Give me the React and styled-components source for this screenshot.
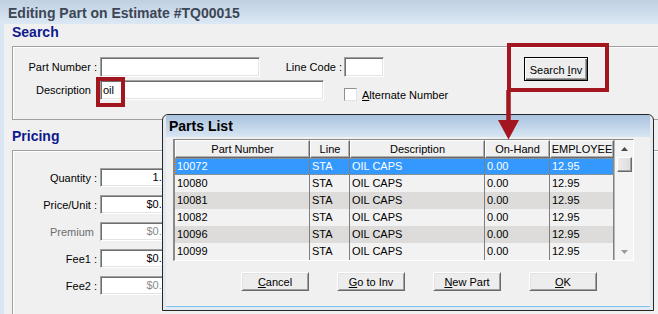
import React from "react";
import styled, { createGlobalStyle } from "styled-components";

const GlobalStyle = createGlobalStyle`
  html, body {
    margin: 0;
    padding: 0;
  }
  body {
    width: 658px;
    height: 314px;
    overflow: hidden;
    background: #f0f0f0;
    font-family: "Liberation Sans", Arial, sans-serif;
    font-size: 11px;
    color: #000;
  }
`;

const Screen = styled.div`
  position: relative;
  width: 658px;
  height: 314px;
  overflow: hidden;
  background: #f0f0f0;
`;

const TitleBar = styled.div`
  height: 24px;
  box-sizing: border-box;
  padding: 3px 0 0 8px;
  line-height: 20px;
  background: linear-gradient(to bottom, #bfd0e2, #dce8f4);
  color: #3c4654;
  font-size: 14px;
  font-weight: bold;
  white-space: nowrap;
`;

const Body = styled.div`
  display: flex;
  flex-direction: column;
  height: 290px;
  box-sizing: border-box;
  border-left: 4px solid #d9e5f2;
  padding-left: 8px;
`;

const SectionTitle = styled.div`
  height: 22px;
  margin-top: ${p => p.$top || 0}px;
  line-height: 16px;
  color: #0f1a8c;
  font-size: 14px;
  font-weight: bold;
`;

const GroupBox = styled.div`
  box-sizing: border-box;
  display: flex;
  flex-direction: column;
  gap: ${p => p.$gap}px;
  height: ${p => (p.$h ? `${p.$h}px` : "auto")};
  flex: ${p => (p.$h ? "none" : "1")};
  margin-right: -20px;
  padding-top: ${p => p.$pt}px;
  border: 1px solid #a0a0a0;
  border-bottom: ${p => (p.$open ? "none" : "1px solid #a0a0a0")};
  box-shadow: inset 1px 1px 0 #fff;
`;

const Row = styled.div`
  display: flex;
  align-items: ${p => p.$align || "center"};
  height: ${p => p.$h}px;
`;

const Label = styled.div`
  box-sizing: border-box;
  width: ${p => p.$w || 84}px;
  padding-right: ${p => p.$pr || 0}px;
  margin-right: ${p => p.$mr ?? 3}px;
  text-align: right;
  white-space: nowrap;
  color: ${p => (p.$dim ? "#6d6d6d" : "#000")};
`;

const Field = styled.div`
  box-sizing: border-box;
  width: ${p => p.$w}px;
  height: ${p => p.$h}px;
  padding: 0 ${p => (p.$right ? 3 : 2)}px;
  line-height: ${p => p.$h - 2}px;
  text-align: ${p => (p.$right ? "right" : "left")};
  color: ${p => (p.$dim ? "#8a8a8a" : "#000")};
  background: #fff;
  border: 1px solid;
  border-color: #a0a0a0 #fff #fff #a0a0a0;
  box-shadow: inset 1px 1px 0 #6e6e6e, inset -1px -1px 0 #e3e3e3;
  white-space: nowrap;
  overflow: hidden;
`;

const CheckGroup = styled.div`
  display: flex;
  align-items: center;
  align-self: flex-start;
  margin: 8px 0 0 20px;
  gap: 5px;
  height: 13px;
`;

const CheckBox = styled.div`
  box-sizing: border-box;
  width: 13px;
  height: 13px;
  background: #fff;
  border: 1px solid;
  border-color: #8e8f8f #e3e3e3 #e3e3e3 #8e8f8f;
`;

const U = styled.span`
  text-decoration: underline;
`;

const Button = styled.div`
  box-sizing: border-box;
  display: flex;
  align-items: center;
  justify-content: center;
  flex: none;
  align-self: flex-start;
  width: ${p => p.$w}px;
  height: ${p => p.$h}px;
  margin-left: ${p => p.$ml || 0}px;
  padding-top: 1px;
  background: #ededed;
  border: 1px solid;
  border-color: ${p => (p.$default ? "#000" : "#fff #696969 #696969 #fff")};
  box-shadow: ${p =>
    p.$default
      ? "inset 1px 1px 0 #fff, inset -1px -1px 0 #696969, inset -2px -2px 0 #a0a0a0"
      : "inset 1px 1px 0 #e3e3e3, inset -1px -1px 0 #a0a0a0"};
  white-space: nowrap;
`;

/* ---------- Parts List dialog ---------- */

const Dialog = styled.div`
  position: absolute;
  left: 162px;
  top: 114px;
  width: 492px;
  height: 197px;
  box-sizing: border-box;
  display: flex;
  flex-direction: column;
  padding: 0 3px 3px;
  background: #e2e9f0;
  border: 1px solid #262626;
  border-radius: 6px 6px 0 0;
`;

const DialogTitle = styled.div`
  height: 22px;
  line-height: 22px;
  padding-left: 3px;
  font-size: 14px;
  font-weight: bold;
  background: linear-gradient(to bottom, #a9c2de, #d8e6f3);
`;

const DialogBody = styled.div`
  flex: 1;
  display: flex;
  flex-direction: column;
  padding: 2px 0 0 7px;
  background: #f0f0f0;
  border-bottom: 1px solid #7cc4ea;
`;

const Grid = styled.div`
  box-sizing: border-box;
  display: flex;
  width: 461px;
  height: 122px;
  border-style: solid;
  border-width: 1px 1px 1px 2px;
  border-color: #8a8a8a #fff #fff #8a8a8a;
  background: #f0f0f0;
`;

const Table = styled.div`
  display: flex;
  flex-direction: column;
  width: 439px;
`;

const cols = "135px 40px 135px 65px 64px";

const HeadRow = styled.div`
  display: grid;
  grid-template-columns: ${cols};
  height: 18px;
`;

const HeadCell = styled.div`
  box-sizing: border-box;
  text-align: center;
  line-height: 16px;
  background: #f0f0f0;
  border: 1px solid;
  border-color: #fff #696969 #696969 #fff;
  box-shadow: inset -1px -1px 0 #b0b0b0;
  white-space: nowrap;
  overflow: hidden;
`;

const DataRow = styled.div`
  display: grid;
  grid-template-columns: ${cols};
  height: 17px;
  background: ${p => (p.$sel ? "#3399ff" : p.$alt ? "#dddcda" : "#f2f2f2")};
  color: ${p => (p.$sel ? "#fff" : "#000")};
  outline: ${p => (p.$sel ? "1px dotted #d08a3a" : "none")};
  outline-offset: -1px;
`;

const Cell = styled.div`
  box-sizing: border-box;
  padding-left: 2px;
  line-height: 17px;
  border-right: 1px solid #7f7f7f;
  white-space: nowrap;
  overflow: hidden;
`;

const ScrollBar = styled.div`
  box-sizing: border-box;
  display: flex;
  flex-direction: column;
  width: 19px;
  border-left: 1px solid #b8b8b8;
  background: #f4f4f4;
`;

const ScrollArrow = styled.div`
  display: flex;
  align-items: center;
  justify-content: center;
  height: 17px;
`;

const Thumb = styled.div`
  box-sizing: border-box;
  width: 15px;
  height: 15px;
  margin-left: 2px;
  background: linear-gradient(to right, #ececec, #dcdcdc);
  border: 1px solid;
  border-color: #fff #696969 #696969 #fff;
  box-shadow: inset -1px -1px 0 #a0a0a0;
`;

const Spacer = styled.div`
  flex: 1;
`;

const ButtonRow = styled.div`
  display: flex;
  gap: 28px;
  margin-top: 11px;
  padding-left: 68px;
`;

/* ---------- annotations ---------- */

const Callout = styled.div`
  position: absolute;
  left: ${p => p.$x}px;
  top: ${p => p.$y}px;
  width: ${p => p.$w}px;
  height: ${p => p.$h}px;
  box-sizing: border-box;
  border: 4px solid #a3161f;
  pointer-events: none;
`;

const Overlay = styled.svg`
  position: absolute;
  left: 0;
  top: 0;
  pointer-events: none;
`;

const parts = [
  ["10072", "STA", "OIL CAPS", "0.00", "12.95"],
  ["10080", "STA", "OIL CAPS", "0.00", "12.95"],
  ["10081", "STA", "OIL CAPS", "0.00", "12.95"],
  ["10082", "STA", "OIL CAPS", "0.00", "12.95"],
  ["10096", "STA", "OIL CAPS", "0.00", "12.95"],
  ["10099", "STA", "OIL CAPS", "0.00", "12.95"],
];

const pricing = [
  { label: "Quantity :", value: "1.00" },
  { label: "Price/Unit :", value: "$0.00" },
  { label: "Premium", value: "$0.00", dimLabel: true, dim: true, pr: 3 },
  { label: "Fee1 :", value: "$0.00" },
  { label: "Fee2 :", value: "$0.00", dim: true },
];

function App() {
  return (
    <Screen>
      <GlobalStyle />
      <TitleBar>Editing Part on Estimate #TQ00015</TitleBar>
      <Body>
        <SectionTitle>Search</SectionTitle>
        <GroupBox $h={74} $pt={10} $gap={3}>
          <Row $h={20} $align="flex-start">
            <Label style={{ lineHeight: "20px" }}>Part Number :</Label>
            <Field $w={160} $h={20} />
            <Label $w={82} $mr={2} style={{ lineHeight: "20px" }}>Line Code :</Label>
            <Field $w={40} $h={20} />
            <Button $w={64} $h={24} $ml={140} $default>
              Search&nbsp;<U>I</U>nv
            </Button>
          </Row>
          <Row $h={20} $align="flex-start">
            <Label $pr={6} style={{ lineHeight: "20px" }}>Description</Label>
            <Field $w={224} $h={20}>oil</Field>
            <CheckGroup>
              <CheckBox />
              <span>
                <U>A</U>lternate Number
              </span>
            </CheckGroup>
          </Row>
        </GroupBox>

        <SectionTitle $top={8}>Pricing</SectionTitle>
        <GroupBox $pt={17} $gap={8} $open>
          {pricing.map(p => (
            <Row key={p.label} $h={19}>
              <Label $dim={p.dimLabel} $pr={p.pr}>{p.label}</Label>
              <Field $w={78} $h={19} $right $dim={p.dim}>
                {p.value}
              </Field>
            </Row>
          ))}
        </GroupBox>
      </Body>

      <Dialog>
        <DialogTitle>Parts List</DialogTitle>
        <DialogBody>
          <Grid>
            <Table>
              <HeadRow>
                <HeadCell>Part Number</HeadCell>
                <HeadCell>Line</HeadCell>
                <HeadCell>Description</HeadCell>
                <HeadCell>On-Hand</HeadCell>
                <HeadCell>EMPLOYEE</HeadCell>
              </HeadRow>
              {parts.map((r, i) => (
                <DataRow key={r[0]} $sel={i === 0} $alt={i % 2 === 0}>
                  {r.map((c, j) => (
                    <Cell key={j}>{c}</Cell>
                  ))}
                </DataRow>
              ))}
            </Table>
            <ScrollBar>
              <ScrollArrow>
                <svg width="7" height="4" viewBox="0 0 7 4">
                  <polygon points="0,4 7,4 3.5,0" fill="#4a4a4a" />
                </svg>
              </ScrollArrow>
              <Thumb />
              <Spacer />
              <ScrollArrow>
                <svg width="7" height="4" viewBox="0 0 7 4">
                  <polygon points="0,0 7,0 3.5,4" fill="#9a9a9a" />
                </svg>
              </ScrollArrow>
            </ScrollBar>
          </Grid>
          <ButtonRow>
            <Button $w={68} $h={19}>
              <U>C</U>ancel
            </Button>
            <Button $w={68} $h={19}>
              <U>G</U>o to Inv
            </Button>
            <Button $w={68} $h={19}>
              <U>N</U>ew Part
            </Button>
            <Button $w={68} $h={19}>
              <U>O</U>K
            </Button>
          </ButtonRow>
        </DialogBody>
      </Dialog>

      <Callout $x={96} $y={77} $w={29} $h={30} />
      <Callout $x={507} $y={43} $w={102} $h={49} />
      <Overlay width="658" height="314" viewBox="0 0 658 314">
        <line x1="508.5" y1="90" x2="508.5" y2="122" stroke="#a3161f" strokeWidth="4.5" />
        <polygon points="498,120 519,120 508.5,139.5" fill="#a3161f" />
      </Overlay>
    </Screen>
  );
}

export default App;
